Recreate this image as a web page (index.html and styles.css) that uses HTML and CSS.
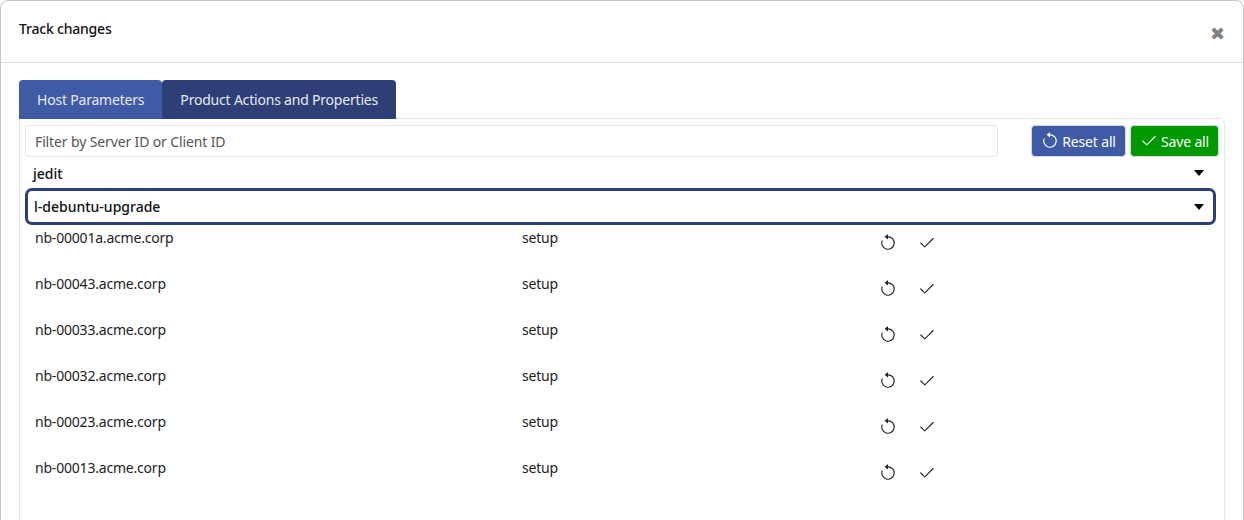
FILE: index.html
```html
<!DOCTYPE html>
<html lang="en">
<head>
  <meta charset="UTF-8">
  <meta name="viewport" content="width=device-width, initial-scale=1.0">
  <title>Track changes</title>
  <link rel="stylesheet" href="styles.css">
</head>
<body>
  <svg class="icon-defs" width="0" height="0">
    <symbol id="icon-reset" viewBox="0 0 16 16">
      <path d="M8 3a5 5 0 1 1-4.55 2.9l-.9-.42A6 6 0 1 0 8 2v1z"/>
      <path d="M8 4.47V.53a.25.25 0 0 0-.41-.19L5.23 2.31a.25.25 0 0 0 0 .38l2.36 1.97A.25.25 0 0 0 8 4.47z"/>
    </symbol>
    <symbol id="icon-check" viewBox="0 0 16 16">
      <path d="M13.85 3.65a.5.5 0 0 1 0 .7l-7.5 7.5a.5.5 0 0 1-.7 0l-3.5-3.5a.5.5 0 1 1 .7-.7L6 10.79l7.15-7.14a.5.5 0 0 1 .7 0z"/>
    </symbol>
  </svg>

  <div class="dialog">
    <div class="dialog-header">
      <h1>Track changes</h1>
      <span class="close">&#10006;</span>
    </div>
    <div class="dialog-body">
      <div class="tabs">
        <div class="tab tab-active">Host Parameters</div>
        <div class="tab">Product Actions and Properties</div>
      </div>
      <div class="panel">
        <div class="toolbar">
          <input class="filter" type="text" placeholder="Filter by Server ID or Client ID">
          <button class="btn btn-reset"><svg class="btn-icon"><use href="#icon-reset"/></svg>Reset all</button>
          <button class="btn btn-save"><svg class="btn-icon"><use href="#icon-check"/></svg>Save all</button>
        </div>
        <div class="group">
          <span>jedit</span>
          <span class="caret"></span>
        </div>
        <div class="group group-open">
          <span>l-debuntu-upgrade</span>
          <span class="caret"></span>
        </div>
        <div class="rows">
          <div class="row">
            <span class="client">nb-00001a.acme.corp</span>
            <span class="action">setup</span>
            <span class="row-icons"><svg class="row-icon"><use href="#icon-reset"/></svg><svg class="row-icon"><use href="#icon-check"/></svg></span>
          </div>
          <div class="row">
            <span class="client">nb-00043.acme.corp</span>
            <span class="action">setup</span>
            <span class="row-icons"><svg class="row-icon"><use href="#icon-reset"/></svg><svg class="row-icon"><use href="#icon-check"/></svg></span>
          </div>
          <div class="row">
            <span class="client">nb-00033.acme.corp</span>
            <span class="action">setup</span>
            <span class="row-icons"><svg class="row-icon"><use href="#icon-reset"/></svg><svg class="row-icon"><use href="#icon-check"/></svg></span>
          </div>
          <div class="row">
            <span class="client">nb-00032.acme.corp</span>
            <span class="action">setup</span>
            <span class="row-icons"><svg class="row-icon"><use href="#icon-reset"/></svg><svg class="row-icon"><use href="#icon-check"/></svg></span>
          </div>
          <div class="row">
            <span class="client">nb-00023.acme.corp</span>
            <span class="action">setup</span>
            <span class="row-icons"><svg class="row-icon"><use href="#icon-reset"/></svg><svg class="row-icon"><use href="#icon-check"/></svg></span>
          </div>
          <div class="row">
            <span class="client">nb-00013.acme.corp</span>
            <span class="action">setup</span>
            <span class="row-icons"><svg class="row-icon"><use href="#icon-reset"/></svg><svg class="row-icon"><use href="#icon-check"/></svg></span>
          </div>
        </div>
      </div>
    </div>
  </div>
</body>
</html>
```

FILE: styles.css
```css
html, body {
  height: 100%;
}
body {
  margin: 0;
  overflow: hidden;
  background-color: #fff;
  color: #212529;
  font-family: "Noto Sans", "Open Sans", sans-serif;
  font-size: 14px;
  letter-spacing: -0.2px;
}
.icon-defs {
  display: block;
  height: 0;
}
.dialog {
  box-sizing: border-box;
  width: 1244px;
  height: 540px;
  border: 1px solid #c4c4cc;
  border-radius: 8px;
}
.dialog-header {
  box-sizing: border-box;
  height: 62px;
  display: flex;
  justify-content: space-between;
  padding: 18px 18px 0 18px;
  border-bottom: 1px solid #dee0e6;
}
h1 {
  margin: 0;
  font-size: 14px;
  font-weight: 500;
  line-height: 19px;
  color: #111;
}
.close {
  margin: 4px 0 0 0;
  color: #808080;
  font-size: 18px;
  line-height: 20px;
}
.dialog-body {
  padding: 17px 18px 0 18px;
}
.tabs {
  display: flex;
  height: 39px;
}
.tab {
  display: flex;
  align-items: center;
  padding: 0 18px;
  background-color: #2e3f77;
  color: #e6e8f0;
  border-radius: 4px 4px 0 0;
}
.tab-active {
  background-color: #3f5ba6;
}
.panel {
  box-sizing: border-box;
  height: 420px;
  margin-top: -1px;
  padding: 6px 5px 0 5px;
  background-color: #fff;
  border: 1px solid #e4e5ea;
  border-radius: 0 6px 0 0;
}
.toolbar {
  display: flex;
  align-items: center;
  height: 32px;
}
.filter {
  box-sizing: border-box;
  width: 973px;
  height: 32px;
  margin-right: 33px;
  padding: 0 9px;
  border: 1px solid #e4e5ea;
  border-radius: 4px;
  font: inherit;
  letter-spacing: -0.13px;
}
.filter::placeholder {
  color: #555;
  opacity: 1;
}
.btn {
  box-sizing: border-box;
  display: flex;
  align-items: center;
  justify-content: center;
  gap: 3px;
  height: 32px;
  padding: 0;
  color: #fff;
  border: 1px solid #d5d8e0;
  border-radius: 4px;
  font: inherit;
  letter-spacing: -0.15px;
}
.btn-reset {
  width: 95px;
  margin-right: 4px;
  background-color: #3f5ba6;
}
.btn-save {
  width: 89px;
  background-color: #009900;
}
.btn-icon {
  width: 18px;
  height: 18px;
  fill: currentColor;
}
.group {
  display: flex;
  align-items: center;
  justify-content: space-between;
  height: 18px;
  margin-top: 7px;
  padding: 0 15px 0 8px;
  font-weight: 500;
  color: #111;
  letter-spacing: 0;
}
.group-open {
  box-sizing: border-box;
  width: 1191px;
  height: 37px;
  margin-top: 6px;
  padding: 0 9px 0 6px;
  border: 3px solid #2e3f77;
  border-radius: 7px;
}
.caret {
  width: 0;
  height: 0;
  border-left: 5px solid transparent;
  border-right: 5px solid transparent;
  border-top: 6px solid #000;
}
.row {
  display: flex;
  height: 46px;
  padding-left: 10px;
  color: #222;
}
.client {
  width: 487px;
  line-height: 25px;
}
.action {
  width: 357px;
  line-height: 25px;
}
.row-icons {
  display: flex;
  gap: 21px;
  padding-top: 9px;
}
.row-icon {
  width: 18px;
  height: 18px;
  fill: #222;
}
```
